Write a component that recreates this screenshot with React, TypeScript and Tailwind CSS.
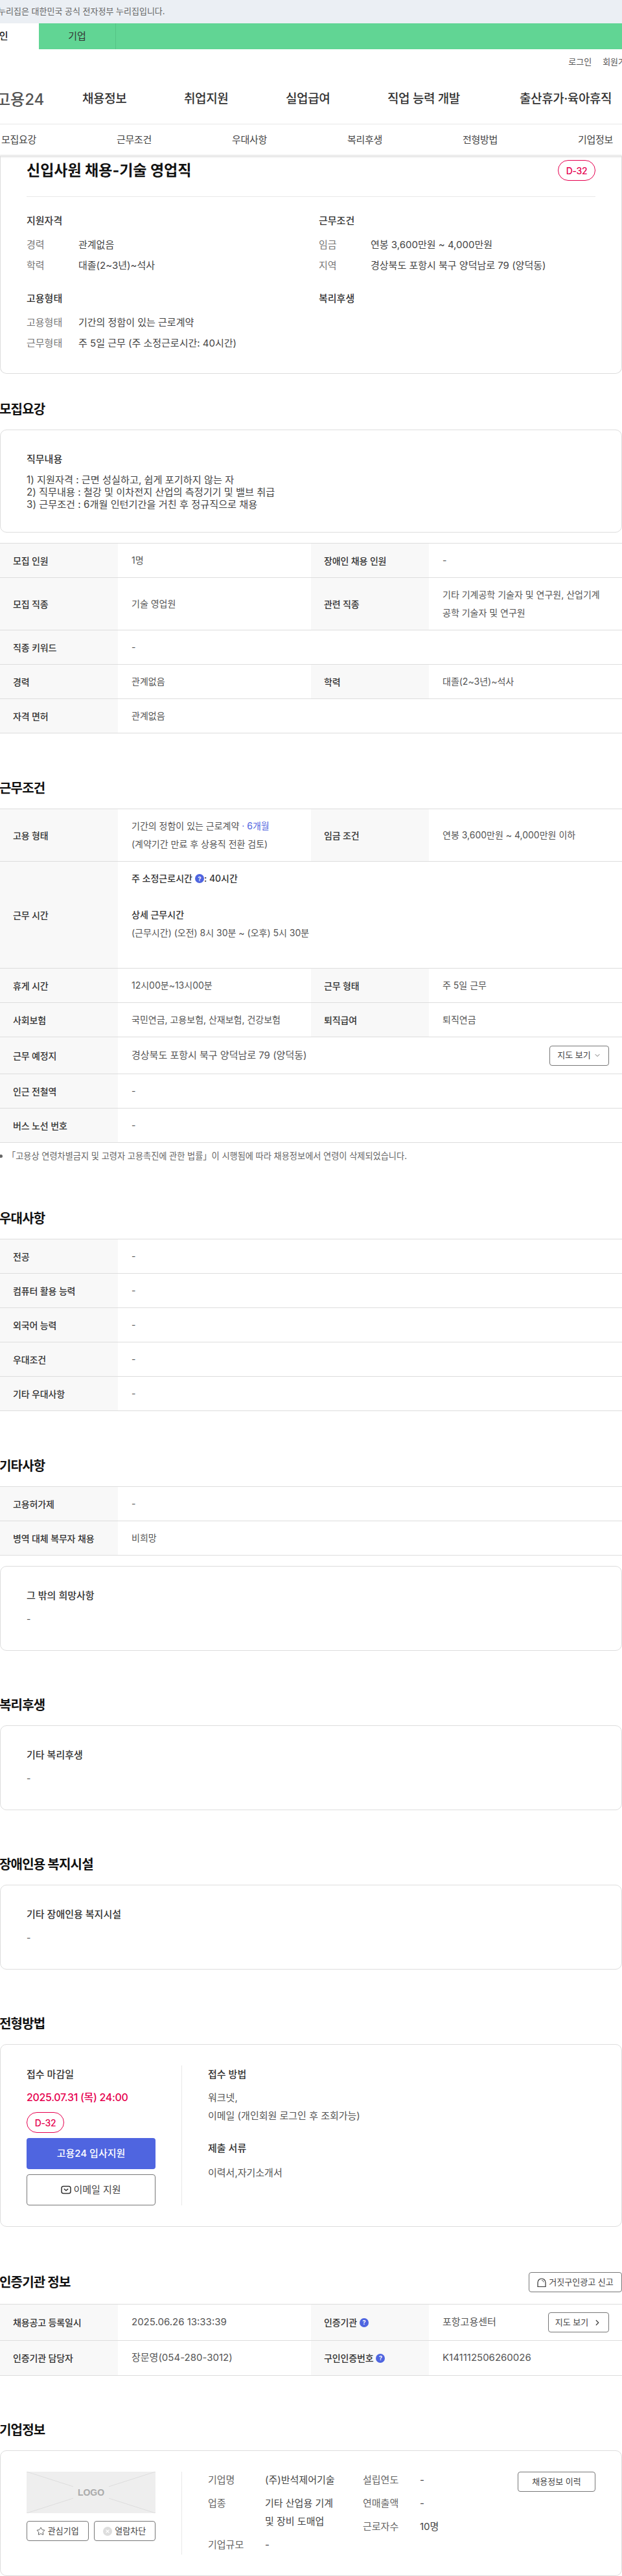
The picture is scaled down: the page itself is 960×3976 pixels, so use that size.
import type { ReactNode } from 'react';
import { ChevronDown, ChevronRight, Star } from 'lucide-react';

function Help() {
  return (
    <span className="inline-flex w-[14px] h-[14px] rounded-full bg-[#4f65e0] text-white text-[9px] font-bold items-center justify-center leading-none">?</span>
  );
}

function Pill() {
  return (
    <span className="flex items-center justify-center w-[58px] h-[32px] rounded-full border border-[#e6004f] text-[#e6004f] text-[14px] font-medium tracking-[-0.02em]">D-32</span>
  );
}

function H2({ children }: { children: ReactNode }) {
  return <h2 className="h-[30px] leading-[30px] text-[20px] font-bold text-[#111] -ml-[1px] mb-4 tracking-[-0.04em]">{children}</h2>;
}

function Label({ children }: { children: ReactNode }) {
  return <div className="bg-[#f8f8f8] flex items-center pl-5 text-[14px] font-medium text-[#333] tracking-[-0.01em]">{children}</div>;
}

function Value({ children, className = '' }: { children: ReactNode; className?: string }) {
  return <div className={`py-3 pl-[21px] pr-3 leading-7 text-[14px] text-[#555] flex items-center ${className}`}>{children}</div>;
}

// row with two label/value pairs
function Row2({ a, b, c, d }: { a: ReactNode; b: ReactNode; c: ReactNode; d: ReactNode }) {
  return (
    <div className="grid grid-cols-[182px_298px_182px_298px] border-b border-[#ddd]">
      <Label>{a}</Label>
      <Value>{b}</Value>
      <Label>{c}</Label>
      <Value>{d}</Value>
    </div>
  );
}

function Row1({ a, b }: { a: ReactNode; b: ReactNode }) {
  return (
    <div className="grid grid-cols-[182px_1fr] border-b border-[#ddd]">
      <Label>{a}</Label>
      <Value>{b}</Value>
    </div>
  );
}

function SimpleCard({ title }: { title: string }) {
  return (
    <div className="border border-[#ddd] rounded-[10px] pt-[35px] pb-[38px] px-10">
      <div className="h-5 leading-5 text-[15px] font-medium text-[#333]">{title}</div>
      <div className="h-5 leading-5 mt-4 text-[14px] text-[#555]">-</div>
    </div>
  );
}

function InfoPair({ label, value }: { label: string; value: string }) {
  return (
    <div className="flex h-8 items-center text-[15px]">
      <span className="w-20 text-[#777]">{label}</span>
      <span className="text-[#444]">{value}</span>
    </div>
  );
}

function CompanyPair({ label, value, h = 'h-9' }: { label: string; value: ReactNode; h?: string }) {
  return (
    <div className={`flex ${h} text-[15px]`}>
      <span className="w-[88px] text-[#666] leading-[28px]">{label}</span>
      <span className="text-[#444] leading-[28px]">{value}</span>
    </div>
  );
}

const subNav = ['모집요강', '근무조건', '우대사항', '복리후생', '전형방법', '기업정보'];

export default function App() {
  return (
    <div className="w-[960px] overflow-hidden bg-white font-['Inter','Noto_Sans_CJK_KR','Noto_Sans',sans-serif]">
      {/* 상단 배너 */}
      <div className="h-9 bg-[#ebeff4] flex items-center -ml-[3px] text-[13px] text-[#666]">누리집은 대한민국 공식 전자정부 누리집입니다.</div>
      <div className="h-10 bg-[#61d594] flex text-[15px] text-[#333]">
        <div className="w-[60px] bg-white flex items-center font-medium text-[#222]"><span className="-ml-[15px]">개인</span></div>
        <div className="w-[119px] flex items-center justify-center border-r border-[#56c386]">기업</div>
      </div>

      {/* 헤더 */}
      <div className="h-10 flex items-center gap-[17px] text-[13px] text-[#555] -mr-[18px] justify-end">
        <span>로그인</span>
        <span>회원가입</span>
      </div>
      <div className="h-[76px] border-b border-[#e8e8e8] relative flex items-center text-[19px] font-medium text-[#333] tracking-[-0.02em]">
        <span className="text-[24px] text-[#555] -ml-[6px] w-[133px] font-medium tracking-normal">고용24</span>
        <span className="w-[157px]">채용정보</span>
        <span className="w-[157px]">취업지원</span>
        <span className="w-[157px]">실업급여</span>
        <span className="w-[204px]">직업 능력 개발</span>
        <span>출산휴가·육아휴직</span>
      </div>
      <div className="h-[49px] grid grid-cols-6 w-[1068px] -ml-[60px] items-center text-center text-[15px] text-[#444] tracking-[-0.02em]">
        {subNav.map(s => <span key={s}>{s}</span>)}
      </div>
      <div className="h-0 shadow-[0_0_3px_1px_rgba(0,0,0,0.18)]" />

      <main>
        {/* 요약 카드 */}
        <div className="border-x border-b border-[#ddd] rounded-b-[10px] px-10 pt-[6px] pb-[30px]">
          <div className="flex items-center justify-between pb-6 border-b border-[#e8e8e8]">
            <h1 className="text-[23px] font-bold text-[#111] leading-8">신입사원 채용-기술 영업직</h1>
            <Pill />
          </div>
          <div className="grid grid-cols-[451px_1fr] mt-[27px]">
            <div>
              <div className="h-5 leading-5 text-[15px] font-medium text-[#333] mb-[11px]">지원자격</div>
              <InfoPair label="경력" value="관계없음" />
              <InfoPair label="학력" value="대졸(2~3년)~석사" />
            </div>
            <div>
              <div className="h-5 leading-5 text-[15px] font-medium text-[#333] mb-[11px]">근무조건</div>
              <InfoPair label="임금" value="연봉 3,600만원 ~ 4,000만원" />
              <InfoPair label="지역" value="경상북도 포항시 북구 양덕남로 79 (양덕동)" />
            </div>
            <div className="mt-[25px]">
              <div className="h-5 leading-5 text-[15px] font-medium text-[#333] mb-[11px]">고용형태</div>
              <InfoPair label="고용형태" value="기간의 정함이 있는 근로계약" />
              <InfoPair label="근무형태" value="주 5일 근무 (주 소정근로시간: 40시간)" />
            </div>
            <div className="mt-[25px]">
              <div className="h-5 leading-5 text-[15px] font-medium text-[#333]">복리후생</div>
            </div>
          </div>
        </div>

        {/* 모집요강 */}
        <section className="mt-10">
          <H2>모집요강</H2>
          <div className="border border-[#ddd] rounded-[10px] pt-[35px] pb-[33px] px-10">
            <div className="h-5 leading-5 text-[15px] font-medium text-[#333] mb-3">직무내용</div>
            <div className="text-[15.2px] leading-[19px] text-[#444]">
              <p>1) 지원자격 : 근면 성실하고, 쉽게 포기하지 않는 자</p>
              <p>2) 직무내용 : 철강 및 이차전지 산업의 측정기기 및 밸브 취급</p>
              <p>3) 근무조건 : 6개월 인턴기간을 거친 후 정규직으로 채용</p>
            </div>
          </div>
          <div className="mt-4 border-t border-[#ddd]">
            <Row2 a="모집 인원" b="1명" c="장애인 채용 인원" d="-" />
            <Row2
              a="모집 직종"
              b="기술 영업원"
              c="관련 직종"
              d={<div>기타 기계공학 기술자 및 연구원, 산업기계<br />공학 기술자 및 연구원</div>}
            />
            <Row1 a="직종 키워드" b="-" />
            <Row2 a="경력" b="관계없음" c="학력" d="대졸(2~3년)~석사" />
            <Row1 a="자격 면허" b="관계없음" />
          </div>
        </section>

        {/* 근무조건 */}
        <section className="mt-[70px]">
          <H2>근무조건</H2>
          <div className="border-t border-[#ddd]">
            <Row2
              a="고용 형태"
              b={<div>기간의 정함이 있는 근로계약 <span className="text-[#4f65e0]">· 6개월</span><br />(계약기간 만료 후 상용직 전환 검토)</div>}
              c="임금 조건"
              d="연봉 3,600만원 ~ 4,000만원 이하"
            />
            <Row1
              a="근무 시간"
              b={
                <div>
                  <div className="flex items-center gap-1 font-medium text-[#333]">주 소정근로시간 <Help /><span className="-ml-1">: 40시간</span></div>
                  <div className="h-7" />
                  <div className="font-medium text-[#333]">상세 근무시간</div>
                  <div>(근무시간) (오전) 8시 30분 ~ (오후) 5시 30분</div>
                  <div className="h-7" />
                </div>
              }
            />
            <Row2 a="휴게 시간" b="12시00분~13시00분" c="근무 형태" d="주 5일 근무" />
            <Row2 a="사회보험" b="국민연금, 고용보험, 산재보험, 건강보험" c="퇴직급여" d="퇴직연금" />
            <div className="grid grid-cols-[182px_1fr] border-b border-[#ddd] h-[57px]">
              <Label>근무 예정지</Label>
              <div className="flex items-center justify-between pl-[21px] pr-5 text-[15px] text-[#555]">
                경상북도 포항시 북구 양덕남로 79 (양덕동)
                <button className="w-[92px] h-[31px] border border-[#777] rounded-[4px] text-[13px] text-[#444] flex items-center justify-center gap-1">
                  지도 보기 <ChevronDown className="w-3 h-3" strokeWidth={1.5} />
                </button>
              </div>
            </div>
            <Row1 a="인근 전철역" b="-" />
            <Row1 a="버스 노선 번호" b="-" />
          </div>
          <p className="mt-[10px] h-5 leading-5 text-[13.2px] text-[#666] flex items-center gap-[7px]">
            <span className="w-[5px] h-[5px] rounded-full bg-[#666] -ml-[1px]" />
            「고용상 연령차별금지 및 고령자 고용촉진에 관한 법률」이 시행됨에 따라 채용정보에서 연령이 삭제되었습니다.
          </p>
        </section>

        {/* 우대사항 */}
        <section className="mt-[72px]">
          <H2>우대사항</H2>
          <div className="border-t border-[#ddd]">
            <Row1 a="전공" b="-" />
            <Row1 a="컴퓨터 활용 능력" b="-" />
            <Row1 a="외국어 능력" b="-" />
            <Row1 a="우대조건" b="-" />
            <Row1 a="기타 우대사항" b="-" />
          </div>
        </section>

        {/* 기타사항 */}
        <section className="mt-[70px]">
          <H2>기타사항</H2>
          <div className="border-t border-[#ddd]">
            <Row1 a="고용허가제" b="-" />
            <Row1 a="병역 대체 복무자 채용" b="비희망" />
          </div>
          <div className="mt-4"><SimpleCard title="그 밖의 희망사항" /></div>
        </section>

        <section className="mt-[69px]">
          <H2>복리후생</H2>
          <SimpleCard title="기타 복리후생" />
        </section>

        <section className="mt-[69px]">
          <H2>장애인용 복지시설</H2>
          <SimpleCard title="기타 장애인용 복지시설" />
        </section>

        {/* 전형방법 */}
        <section className="mt-[69px]">
          <H2>전형방법</H2>
          <div className="border border-[#ddd] rounded-[10px] pt-8 pb-8 px-10 flex">
            <div className="w-[240px] pr-10 border-r border-[#e8e8e8]">
              <div className="h-7 leading-7 text-[15px] font-medium text-[#333]">접수 마감일</div>
              <div className="h-7 leading-7 mt-[7px] text-[16px] font-medium text-[#e6004f] tracking-[-0.02em]">2025.07.31 (목) 24:00</div>
              <div className="mt-[9px]"><Pill /></div>
              <button className="mt-2 w-[199px] h-12 rounded-[4px] bg-[#4f65e0] text-white text-[15px] font-medium">고용24 입사지원</button>
              <button className="mt-2 w-[199px] h-12 rounded-[4px] border border-[#777] text-[15px] text-[#444] flex items-center justify-center gap-[3px]">
                <svg width="16" height="16" viewBox="0 0 16 16" fill="none" stroke="#333" strokeWidth="1.5">
                  <rect x="1" y="2.5" width="14" height="11" rx="3" />
                  <path d="M4.8 6.4 8 9l3.2-2.6" />
                </svg>
                이메일 지원
              </button>
            </div>
            <div className="pl-10 text-[15px] text-[#555]">
              <div className="h-7 leading-7 font-medium text-[#333]">접수 방법</div>
              <div className="leading-7 mt-2">워크넷,<br />이메일 (개인회원 로그인 후 조회가능)</div>
              <div className="h-7 leading-7 mt-[22px] font-medium text-[#333]">제출 서류</div>
              <div className="leading-7 mt-[10px]">이력서,자기소개서</div>
            </div>
          </div>
        </section>

        {/* 인증기관 정보 */}
        <section className="mt-[70px]">
          <div className="flex items-center justify-between h-[31px] mb-[18px]">
            <h2 className="text-[20px] font-bold text-[#111] -ml-[1px] tracking-[-0.04em]">인증기관 정보</h2>
            <button className="w-[144px] h-[31px] border border-[#777] rounded-[4px] text-[13px] text-[#444] flex items-center justify-center gap-1">
              <svg width="14" height="16" viewBox="0 0 14 16" fill="none" stroke="#333" strokeWidth="1.2">
                <path d="M1 14.5V8a6 6 0 0 1 12 0v6.5Z" />
                <path d="M7 4.5a3 3 0 0 1 3 3" strokeWidth="0.8" />
              </svg>
              거짓구인광고 신고
            </button>
          </div>
          <div className="border-t border-[#ddd]">
            <div className="grid grid-cols-[182px_298px_182px_298px] border-b border-[#ddd] h-[56px]">
              <Label>채용공고 등록일시</Label>
              <div className="flex items-center pl-[21px] text-[15px] text-[#555]">2025.06.26 13:33:39</div>
              <Label><span className="flex items-center gap-1">인증기관 <Help /></span></Label>
              <div className="flex items-center justify-between pl-[21px] pr-5 text-[15px] text-[#555]">
                포항고용센터
                <button className="w-[94px] h-[31px] border border-[#777] rounded-[4px] text-[13px] text-[#444] flex items-center justify-center gap-[7px]">
                  지도 보기 <ChevronRight className="w-[14px] h-[14px]" strokeWidth={2.2} />
                </button>
              </div>
            </div>
            <div className="grid grid-cols-[182px_298px_182px_298px] border-b border-[#ddd] h-[54px]">
              <Label>인증기관 담당자</Label>
              <div className="flex items-center pl-[21px] text-[15px] text-[#555]">장문영(054-280-3012)</div>
              <Label><span className="flex items-center gap-1">구인인증번호 <Help /></span></Label>
              <div className="flex items-center pl-[21px] text-[15px] text-[#555]">K141112506260026</div>
            </div>
          </div>
        </section>

        {/* 기업정보 */}
        <section className="mt-[69px]">
          <H2>기업정보</H2>
          <div className="border border-[#ddd] rounded-[10px] h-[194px] pt-8 px-10 flex">
            <div className="w-[240px] h-[128px] pr-10 border-r border-[#e8e8e8]">
              <div className="relative w-[199px] h-16 bg-[#eee] flex items-center justify-center overflow-hidden">
                <svg className="absolute inset-0" width="199" height="64" viewBox="0 0 199 64" stroke="#ddd" fill="none">
                  <path d="M0 0 72 23M199 0 127 23M0 64 72 41M199 64 127 41" />
                </svg>
                <span className="text-[14px] font-bold text-[#aaa] font-['Liberation_Sans',sans-serif]">LOGO</span>
              </div>
              <div className="mt-3 flex gap-2">
                <button className="flex-1 h-[31px] border border-[#777] rounded-[4px] text-[13px] text-[#444] flex items-center justify-center gap-1">
                  <Star className="w-[14px] h-[14px]" strokeWidth={1.5} /> 관심기업
                </button>
                <button className="flex-1 h-[31px] border border-[#777] rounded-[4px] text-[13px] text-[#444] flex items-center justify-center gap-1">
                  <svg width="14" height="14" viewBox="0 0 14 14">
                    <circle cx="7" cy="7" r="7" fill="#ddd" />
                    <path d="M4.6 4.6l4.8 4.8M9.4 4.6l-4.8 4.8" stroke="#fff" strokeWidth="1.3" />
                  </svg>
                  열람차단
                </button>
              </div>
            </div>
            <div className="pl-10 flex-1 flex justify-between -mt-px">
              <div className="flex">
                <div className="w-[239px]">
                  <CompanyPair label="기업명" value="(주)반석제어기술" />
                  <CompanyPair label="업종" value={<>기타 산업용 기계<br />및 장비 도매업</>} h="h-[64px]" />
                  <CompanyPair label="기업규모" value="-" />
                </div>
                <div>
                  <CompanyPair label="설립연도" value="-" />
                  <CompanyPair label="연매출액" value="-" />
                  <CompanyPair label="근로자수" value="10명" />
                </div>
              </div>
              <button className="mt-px w-[120px] h-[31px] border border-[#777] rounded-[4px] text-[13px] text-[#444]">채용정보 이력</button>
            </div>
          </div>
        </section>
      </main>
    </div>
  );
}
